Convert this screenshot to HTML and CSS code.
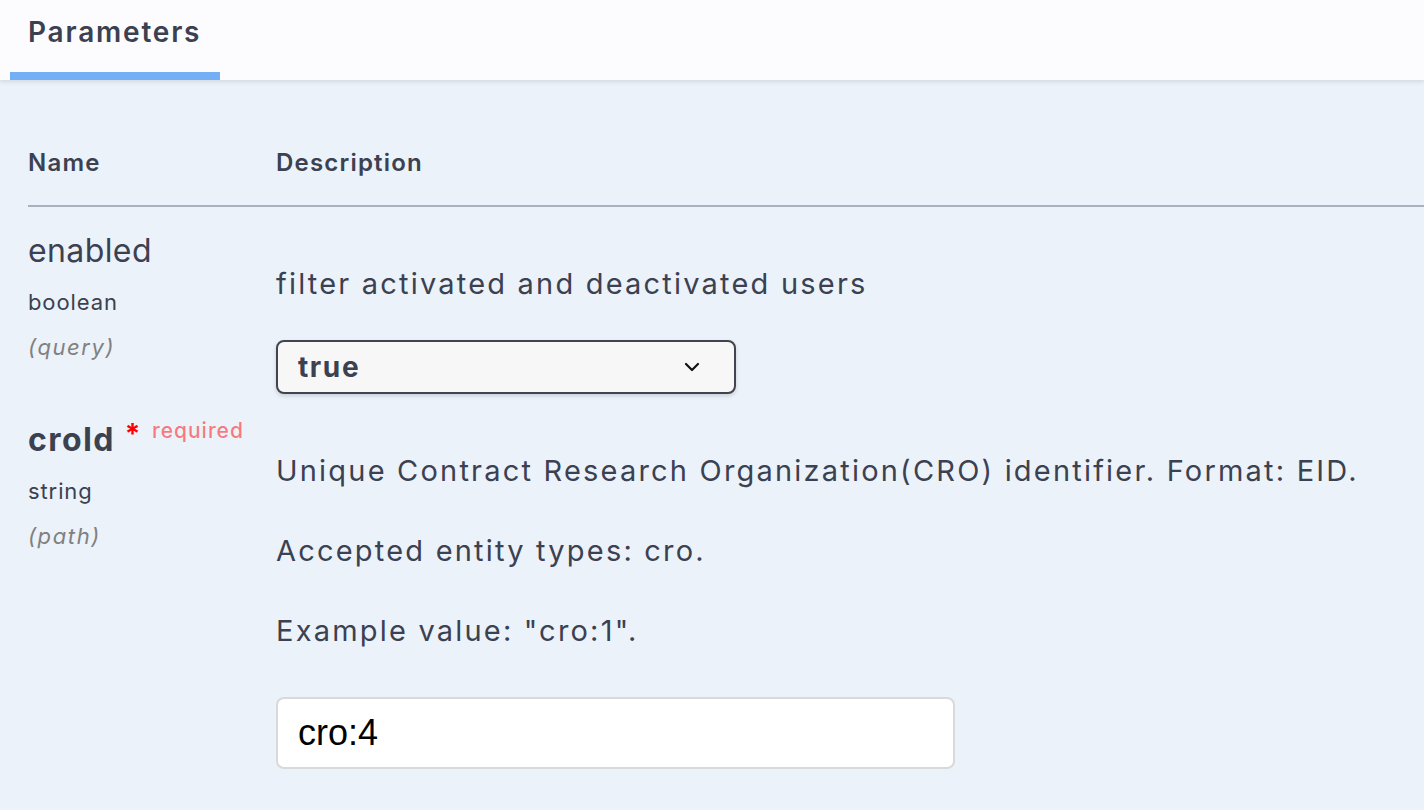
FILE: index.html
```html
<!DOCTYPE html>
<html lang="en">
<head>
  <meta charset="UTF-8">
  <meta name="viewport" content="width=device-width, initial-scale=1.0">
  <title>Parameters</title>
  <link rel="stylesheet" href="styles.css">
</head>
<body>
  <div class="section-header">
    <div class="tab-header">
      <h4 class="tab-title">Parameters</h4>
    </div>
  </div>
  <div class="parameters-container">
    <div class="param-head">
      <div class="col-name">Name</div>
      <div class="col-desc">Description</div>
    </div>

    <div class="param-row">
      <div class="col-name">
        <div class="param-name">enabled</div>
        <div class="param-type">boolean</div>
        <div class="param-in">(query)</div>
      </div>
      <div class="col-desc">
        <p>filter activated and deactivated users</p>
        <div class="select-box">
          <span>true</span>
          <svg class="chevron" width="16" height="10" viewBox="0 0 16 10">
            <path d="M2 2 L8 8 L14 2" fill="none" stroke="#111" stroke-width="2.2" stroke-linecap="round" stroke-linejoin="round"/>
          </svg>
        </div>
      </div>
    </div>

    <div class="param-row">
      <div class="col-name">
        <div class="param-name required">croId<span class="star">*</span><span class="req-label">required</span></div>
        <div class="param-type">string</div>
        <div class="param-in">(path)</div>
      </div>
      <div class="col-desc">
        <p>Unique Contract Research Organization(CRO) identifier. Format: EID.</p>
        <p>Accepted entity types: cro.</p>
        <p>Example value: "cro:1".</p>
        <input class="text-input" type="text" value="cro:4">
      </div>
    </div>
  </div>
</body>
</html>
```

FILE: styles.css
```css
html, body {
  margin: 0;
  height: 100%;
}
body {
  font-family: Inter, "Noto Sans", sans-serif;
  color: #3b4151;
  background-color: #ebf2fa;
  overflow: hidden;
}
.section-header {
  height: 80px;
  background-color: #fcfcfe;
  box-shadow: 0 2px 4px rgba(0, 0, 0, 0.1);
  padding: 0 10px;
  box-sizing: border-box;
  display: flex;
  align-items: flex-end;
}
.tab-header {
  width: 210px;
  height: 74px;
  border-bottom: 8px solid #74aef5;
  box-sizing: border-box;
}
.tab-title {
  margin: 0;
  padding: 8px 0 0 18px;
  font-size: 28px;
  font-weight: 600;
  line-height: 36px;
  letter-spacing: 1.8px;
}
.parameters-container {
  padding: 65px 0 0 28px;
}
.param-head {
  display: flex;
  font-size: 24px;
  font-weight: 600;
  line-height: 36px;
  letter-spacing: 1.2px;
  padding-bottom: 24px;
  border-bottom: 2px solid #aab1bd;
}
.col-name {
  width: 248px;
  flex-shrink: 0;
}
.col-desc {
  flex: 1;
}
.param-row {
  display: flex;
  padding-top: 24px;
}
.param-name {
  font-size: 32px;
  line-height: 40px;
  font-weight: 400;
  letter-spacing: 0.4px;
}
.param-name.required {
  font-weight: 700;
  letter-spacing: 1.4px;
  margin-top: 2px;
}
.star {
  color: #f00;
  font-size: 28px;
  font-weight: 700;
  vertical-align: top;
  position: relative;
  top: -6px;
  margin-left: 10px;
}
.req-label {
  color: rgba(255, 0, 0, 0.5);
  font-size: 21px;
  font-weight: 500;
  letter-spacing: 1px;
  vertical-align: top;
  position: relative;
  top: -9px;
  margin-left: 10px;
}
.param-type {
  font-size: 22px;
  line-height: 30px;
  margin-top: 16px;
  letter-spacing: 0.9px;
}
.param-in {
  font-size: 22px;
  line-height: 30px;
  margin-top: 15px;
  font-style: italic;
  color: #808080;
  letter-spacing: 1.6px;
}
.col-desc p {
  margin: 33px 0 0;
  font-size: 29px;
  line-height: 40px;
  letter-spacing: 2.2px;
}
.col-desc p + p {
  margin-top: 40px;
}
.select-box {
  margin-top: 36px;
  width: 460px;
  height: 54px;
  box-sizing: border-box;
  border: 2px solid #41444e;
  border-radius: 8px;
  background-color: #f7f7f7;
  box-shadow: 0 2px 4px rgba(0, 0, 0, 0.15);
  display: flex;
  align-items: center;
  justify-content: space-between;
  padding: 0 34px 0 20px;
  font-size: 28px;
  font-weight: 700;
  letter-spacing: 1.6px;
}
.text-input {
  display: block;
  margin-top: 46px;
  width: 679px;
  height: 72px;
  box-sizing: border-box;
  border: 2px solid #d9d9d9;
  border-radius: 8px;
  background-color: #fff;
  padding: 0 20px;
  font-family: "Liberation Sans", Arial, sans-serif;
  font-size: 36px;
  color: #000;
  outline: none;
}
```
